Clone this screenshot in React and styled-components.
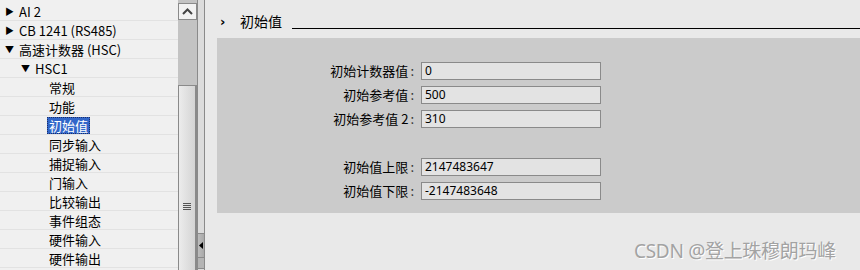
import styled, { createGlobalStyle } from 'styled-components';

const GlobalStyle = createGlobalStyle`
  html, body {
    margin: 0;
    padding: 0;
    background: #e9e9e9;
  }
  body {
    font-family: 'Noto Sans CJK SC', 'Noto Sans', sans-serif;
    font-size: 13px;
    color: #000;
  }
`;

const SApp = styled.div`
  position: relative;
  display: flex;
  width: 860px;
  height: 270px;
  overflow: hidden;
  background: #e9e9e9;
`;

/* ---------- left tree ---------- */
const STreePane = styled.div`
  width: 178px;
  flex-shrink: 0;
  background: #f0f0f0;
  padding-top: 2px;
  box-sizing: border-box;
  overflow: hidden;
`;
const STreeRow = styled.div`
  height: 19px;
  box-sizing: border-box;
  border-bottom: 1px solid #e2e2e2;
  display: flex;
  align-items: center;
  padding-left: ${(p) => p.$indent}px;
  white-space: nowrap;
  line-height: 1;
`;
const SArrow = styled.span`
  width: 12px;
  font-size: 9px;
  color: #000;
  display: inline-block;
`;
const SRowText = styled.span`
  padding: 1px 1px;
  border: 1px dotted ${(p) => (p.$selected ? '#1b2e6a' : 'transparent')};
  background: ${(p) => (p.$selected ? '#3166c9' : 'transparent')};
  color: ${(p) => (p.$selected ? '#fff' : '#000')};
`;

/* ---------- scrollbar ---------- */
const SScrollbar = styled.div`
  width: 19px;
  flex-shrink: 0;
  display: flex;
  flex-direction: column;
  background: #c3c3c3;
`;
const SUpButton = styled.div`
  margin-top: 3px;
  height: 17px;
  box-sizing: border-box;
  border: 1px solid #8a8a8a;
  background: #f2f2f2;
  display: flex;
  align-items: center;
  justify-content: center;
`;
const STrack = styled.div`
  height: 65px;
`;
const SThumb = styled.div`
  flex: 1;
  border: 1px solid #8a8a8a;
  border-right-width: 2px;
  border-bottom: none;
  background: linear-gradient(to right, #ececec, #d4d4d4);
  display: flex;
  align-items: flex-start;
  justify-content: center;
  padding-top: 117px;
  box-sizing: border-box;
`;
const SGrip = styled.div`
  width: 8px;
  height: 7px;
  background: repeating-linear-gradient(
    to bottom,
    #555 0,
    #555 1px,
    transparent 1px,
    transparent 2px
  );
`;

/* ---------- splitter ---------- */
const SSplitter = styled.div`
  width: 8px;
  flex-shrink: 0;
  box-sizing: border-box;
  border-left: 1px solid #8a8a8a;
  border-right: 1px solid #8a8a8a;
  background: #dcdcdc;
  display: flex;
  flex-direction: column;
  padding-top: 233px;
`;
const SCollapse = styled.div`
  height: 23px;
  border-top: 1px solid #8a8a8a;
  border-bottom: 1px solid #8a8a8a;
  background: linear-gradient(to right, #bdbdbd, #a9a9a9);
  display: flex;
  align-items: center;
  justify-content: center;
`;
const SCollapseTail = styled.div`
  height: 10px;
  border-bottom: 1px solid #8a8a8a;
  background: #b4b4b4;
`;

/* ---------- right content ---------- */
const SContent = styled.div`
  flex: 1;
  padding: 10px 0 0 12px;
  box-sizing: border-box;
  background: #e9e9e9;
`;
const SSectionHeader = styled.div`
  display: flex;
  align-items: center;
  height: 22px;
  padding-left: 3px;
`;
const SChevron = styled.span`
  font-size: 13px;
  font-weight: bold;
  width: 20px;
  font-family: 'DejaVu Sans', sans-serif;
`;
const STitle = styled.span`
  font-size: 14px;
  margin-right: 10px;
`;
const SRule = styled.div`
  flex: 1;
  height: 1px;
  background: #000;
  margin-top: 14px;
`;
const SBox = styled.div`
  margin-top: 6px;
  background: #cbcbcb;
  padding: 24px 0 13px 0;
  display: grid;
  grid-template-columns: 202px 180px;
  column-gap: 2px;
  row-gap: 6px;
`;
const SLabel = styled.div`
  text-align: right;
  font-size: 13px;
  line-height: 18px;
  height: 18px;
  padding-right: 5px;
  white-space: nowrap;
`;
const SColon = styled.span`
  margin-left: 2px;
  color: #333;
`;
const SValue = styled.div`
  height: 18px;
  box-sizing: border-box;
  border: 1px solid #8a8a8a;
  background: #e3e3e3;
  font-family: 'Noto Sans', sans-serif;
  font-size: 12px;
  line-height: 16px;
  padding-left: 3px;
`;
const SSpacer = styled.div`
  grid-column: 1 / span 2;
  height: 18px;
`;
const SWatermark = styled.div`
  position: absolute;
  left: 634px;
  top: 236px;
  font-size: 19px;
  color: #a3a3a3;
  text-shadow: 1px 1px 0 #fff;
  font-family: 'Noto Sans', 'Noto Sans CJK SC', sans-serif;
  letter-spacing: -0.3px;
`;

const tree = [
  { text: 'AI 2', level: 0, arrow: '▶' },
  { text: 'CB 1241 (RS485)', level: 0, arrow: '▶' },
  { text: '高速计数器 (HSC)', level: 0, arrow: '▼' },
  { text: 'HSC1', level: 1, arrow: '▼' },
  { text: '常规', level: 2 },
  { text: '功能', level: 2 },
  { text: '初始值', level: 2, selected: true },
  { text: '同步输入', level: 2 },
  { text: '捕捉输入', level: 2 },
  { text: '门输入', level: 2 },
  { text: '比较输出', level: 2 },
  { text: '事件组态', level: 2 },
  { text: '硬件输入', level: 2 },
  { text: '硬件输出', level: 2 },
];

const fields = [
  { label: '初始计数器值', value: '0' },
  { label: '初始参考值', value: '500' },
  { label: '初始参考值 2', value: '310' },
  null,
  { label: '初始值上限', value: '2147483647' },
  { label: '初始值下限', value: '-2147483648' },
];

function App() {
  return (
    <SApp>
      <GlobalStyle />
      <STreePane>
        {tree.map((t) => (
          <STreeRow key={t.text} $indent={t.arrow ? 5 + t.level * 16 : 47}>
            {t.arrow && <SArrow>{t.arrow}</SArrow>}
            <SRowText $selected={t.selected}>{t.text}</SRowText>
          </STreeRow>
        ))}
      </STreePane>
      <SScrollbar>
        <SUpButton>
          <svg width="11" height="7" viewBox="0 0 11 7">
            <path d="M1 6 L5.5 1.5 L10 6" fill="none" stroke="#444" strokeWidth="2" />
          </svg>
        </SUpButton>
        <STrack />
        <SThumb>
          <SGrip />
        </SThumb>
      </SScrollbar>
      <SSplitter>
        <SCollapse>
          <svg width="4" height="7" viewBox="0 0 4 7">
            <path d="M4 0 L0 3.5 L4 7 Z" fill="#000" />
          </svg>
        </SCollapse>
        <SCollapseTail />
      </SSplitter>
      <SContent>
        <SSectionHeader>
          <SChevron>›</SChevron>
          <STitle>初始值</STitle>
          <SRule />
        </SSectionHeader>
        <SBox>
          {fields.map((f, i) =>
            f ? (
              [
                <SLabel key={`l${i}`}>
                  {f.label}
                  <SColon>:</SColon>
                </SLabel>,
                <SValue key={`v${i}`}>{f.value}</SValue>,
              ]
            ) : (
              <SSpacer key={`s${i}`} />
            )
          )}
        </SBox>
      </SContent>
      <SWatermark>CSDN @登上珠穆朗玛峰</SWatermark>
    </SApp>
  );
}

export default App;
